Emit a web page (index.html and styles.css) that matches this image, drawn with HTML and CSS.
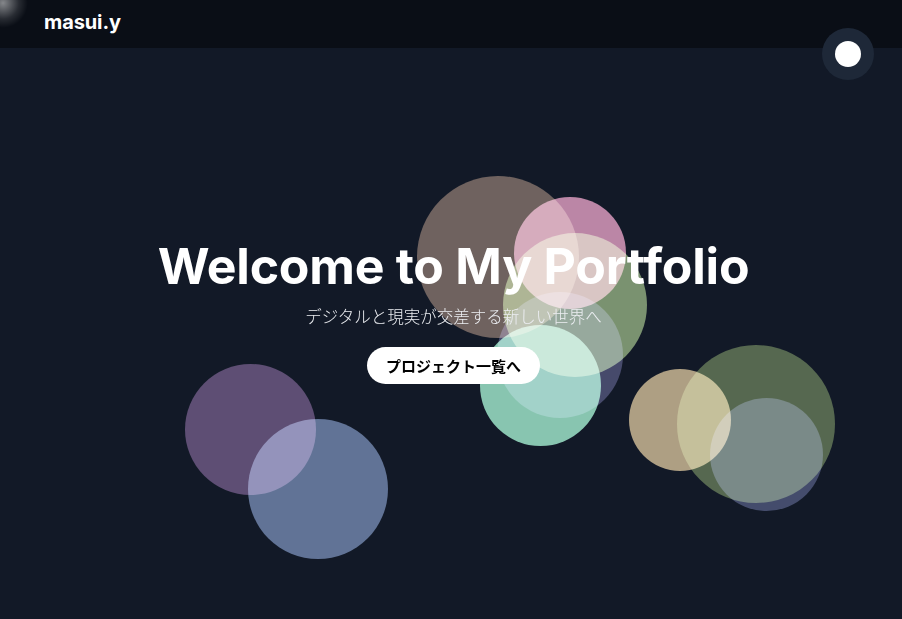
FILE: index.html
```html
<!DOCTYPE html>
<html lang="ja">
<head>
<meta charset="utf-8">
<title>masui.y</title>
<link rel="stylesheet" href="styles.css">
</head>
<body>
<div class="glow"></div>
<header class="site-header">
  <a class="logo" href="#">masui.y</a>
</header>
<button class="theme-toggle" aria-label="toggle"><span class="theme-dot"></span></button>
<main class="hero">
  <div class="bubbles">
    <span class="bubble b-brown"></span>
    <span class="bubble b-pink"></span>
    <span class="bubble b-green"></span>
    <span class="bubble b-navy"></span>
    <span class="bubble b-mint"></span>
    <span class="bubble b-purple"></span>
    <span class="bubble b-blue"></span>
    <span class="bubble b-dgreen"></span>
    <span class="bubble b-navy2"></span>
    <span class="bubble b-tan"></span>
  </div>
  <div class="hero-content">
    <h1 class="hero-title">Welcome to My Portfolio</h1>
    <p class="hero-sub">デジタルと現実が交差する新しい世界へ</p>
    <a class="hero-btn" href="#">プロジェクト一覧へ</a>
  </div>
</main>
</body>
</html>
```
FILE: styles.css
```css
* { box-sizing: border-box; }
html, body { margin: 0; padding: 0; }
body {
  background: #121927;
  color: #fff;
  font-family: Inter, "Noto Sans CJK JP", sans-serif;
  overflow: hidden;
  height: 619px;
}
.glow {
  position: fixed;
  left: -22px;
  top: -22px;
  width: 50px;
  height: 50px;
  border-radius: 50%;
  background: radial-gradient(circle, rgba(255,255,255,0.5) 0%, rgba(255,255,255,0.12) 45%, rgba(255,255,255,0) 70%);
  z-index: 20;
  pointer-events: none;
}
.site-header {
  position: fixed;
  top: 0; left: 0; right: 0;
  height: 48px;
  background: #0a0e16;
  display: flex;
  align-items: center;
  padding-left: 44px;
  z-index: 10;
}
.logo {
  color: #fff;
  text-decoration: none;
  font-family: Inter, sans-serif;
  font-weight: 700;
  font-size: 20px;
  letter-spacing: -0.1px;
  margin-top: -5px;
}
.theme-toggle {
  position: fixed;
  top: 28px;
  right: 28px;
  width: 52px;
  height: 52px;
  border-radius: 50%;
  border: none;
  background: #1e2838;
  display: flex;
  align-items: center;
  justify-content: center;
  padding: 0;
  z-index: 11;
}
.theme-dot {
  width: 26px;
  height: 26px;
  border-radius: 50%;
  background: #fff;
}
.hero {
  position: relative;
  height: 619px;
  display: flex;
  align-items: center;
  justify-content: center;
  padding-left: 5px;
}
.bubbles {
  position: absolute;
  inset: 0;
}
.bubble {
  position: absolute;
  border-radius: 50%;
  mix-blend-mode: screen;
}
.b-brown  { left: 417px; top: 176px; width: 162px; height: 162px; background: #645142; }
.b-pink   { left: 514px; top: 197px; width: 112px; height: 112px; background: #b67996; }
.b-green  { left: 503px; top: 233px; width: 144px; height: 144px; background: #708656; }
.b-navy   { left: 497px; top: 292px; width: 126px; height: 126px; background: #383650; }
.b-mint   { left: 480px; top: 325px; width: 121px; height: 121px; background: #7fbfa2; }
.b-purple { left: 185px; top: 364px; width: 131px; height: 131px; background: #523b5b; }
.b-blue   { left: 248px; top: 419px; width: 140px; height: 140px; background: #556483; }
.b-dgreen { left: 677px; top: 345px; width: 158px; height: 158px; background: #495830; }
.b-navy2  { left: 710px; top: 398px; width: 113px; height: 113px; background: #363951; }
.b-tan    { left: 629px; top: 369px; width: 102px; height: 102px; background: #a8956d; }
.hero-content {
  position: relative;
  display: flex;
  flex-direction: column;
  align-items: center;
  text-align: center;
}
.hero-title {
  margin: 0;
  font-family: Inter, sans-serif;
  font-weight: 700;
  font-size: 50px;
  line-height: 60px;
  letter-spacing: -0.25px;
  color: #fff;
}
.hero-sub {
  margin: 8px 0 0;
  font-family: "Noto Sans CJK JP", sans-serif;
  font-weight: 300;
  font-size: 16.5px;
  line-height: 24px;
  color: #eceef2;
}
.hero-btn {
  margin-top: 19px;
  display: inline-block;
  background: #fff;
  color: #000;
  text-decoration: none;
  font-family: "Noto Sans CJK JP", sans-serif;
  font-weight: 700;
  font-size: 15px;
  line-height: 37px;
  height: 37px;
  padding: 0 19px;
  border-radius: 19px;
}
```
